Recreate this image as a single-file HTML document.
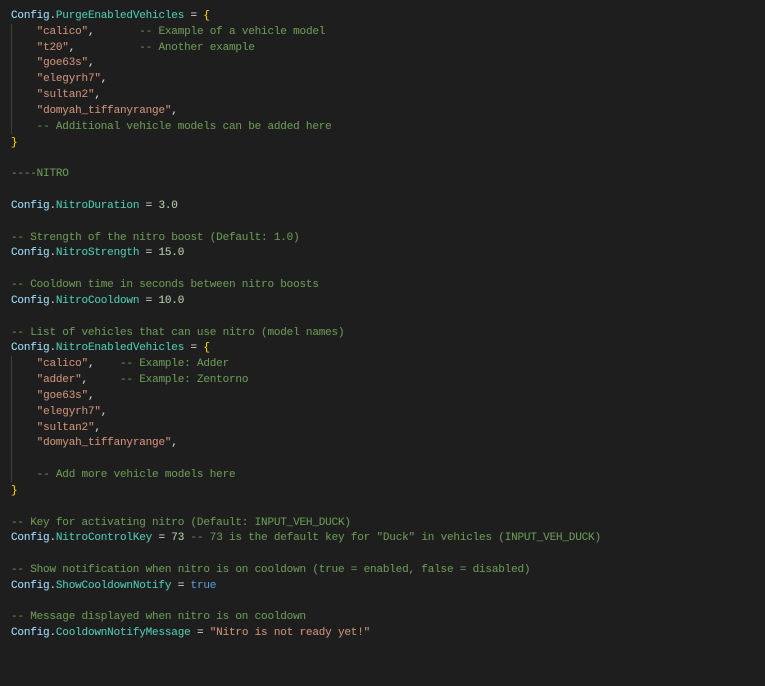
<!DOCTYPE html>
<html>
<head>
<meta charset="utf-8">
<style>
html,body{margin:0;padding:0;background:#1e1e1e;width:765px;height:686px;overflow:hidden}
.wrap{position:relative;width:765px;height:686px;background:#1e1e1e;overflow:hidden}
pre{position:absolute;left:11px;top:9px;margin:0;font-family:"Liberation Mono",monospace;font-size:11px;letter-spacing:-0.19px;line-height:15.83px;color:#d4d4d4;white-space:pre;font-weight:normal;-webkit-text-stroke:0.08px currentColor}
.guide{position:absolute;left:11px;width:1px;background:#404040}
i{font-style:normal}
.v{color:#9cdcfe}
.p{color:#4ec9b0}
.c{color:#6a9955}
.s{color:#ce9178}
.n{color:#b5cea8}
.k{color:#569cd6}
.b{color:#ffd700}
</style>
</head>
<body>
<div class="wrap">
<div class="guide" style="top:24px;height:110px"></div>
<div class="guide" style="top:356px;height:126px"></div>
<pre><i class="v">Config</i>.<i class="p">PurgeEnabledVehicles</i> = <i class="b">{</i>
    <i class="s">"calico"</i>,       <i class="c">-- Example of a vehicle model</i>
    <i class="s">"t20"</i>,          <i class="c">-- Another example</i>
    <i class="s">"goe63s"</i>,
    <i class="s">"elegyrh7"</i>,
    <i class="s">"sultan2"</i>,
    <i class="s">"domyah_tiffanyrange"</i>,
    <i class="c">-- Additional vehicle models can be added here</i>
<i class="b">}</i>

<i class="c">----NITRO</i>

<i class="v">Config</i>.<i class="p">NitroDuration</i> = <i class="n">3.0</i>

<i class="c">-- Strength of the nitro boost (Default: 1.0)</i>
<i class="v">Config</i>.<i class="p">NitroStrength</i> = <i class="n">15.0</i>

<i class="c">-- Cooldown time in seconds between nitro boosts</i>
<i class="v">Config</i>.<i class="p">NitroCooldown</i> = <i class="n">10.0</i>

<i class="c">-- List of vehicles that can use nitro (model names)</i>
<i class="v">Config</i>.<i class="p">NitroEnabledVehicles</i> = <i class="b">{</i>
    <i class="s">"calico"</i>,    <i class="c">-- Example: Adder</i>
    <i class="s">"adder"</i>,     <i class="c">-- Example: Zentorno</i>
    <i class="s">"goe63s"</i>,
    <i class="s">"elegyrh7"</i>,
    <i class="s">"sultan2"</i>,
    <i class="s">"domyah_tiffanyrange"</i>,

    <i class="c">-- Add more vehicle models here</i>
<i class="b">}</i>

<i class="c">-- Key for activating nitro (Default: INPUT_VEH_DUCK)</i>
<i class="v">Config</i>.<i class="p">NitroControlKey</i> = <i class="n">73</i> <i class="c">-- 73 is the default key for "Duck" in vehicles (INPUT_VEH_DUCK)</i>

<i class="c">-- Show notification when nitro is on cooldown (true = enabled, false = disabled)</i>
<i class="v">Config</i>.<i class="p">ShowCooldownNotify</i> = <i class="k">true</i>

<i class="c">-- Message displayed when nitro is on cooldown</i>
<i class="v">Config</i>.<i class="p">CooldownNotifyMessage</i> = <i class="s">"Nitro is not ready yet!"</i></pre>
</div>
</body>
</html>
